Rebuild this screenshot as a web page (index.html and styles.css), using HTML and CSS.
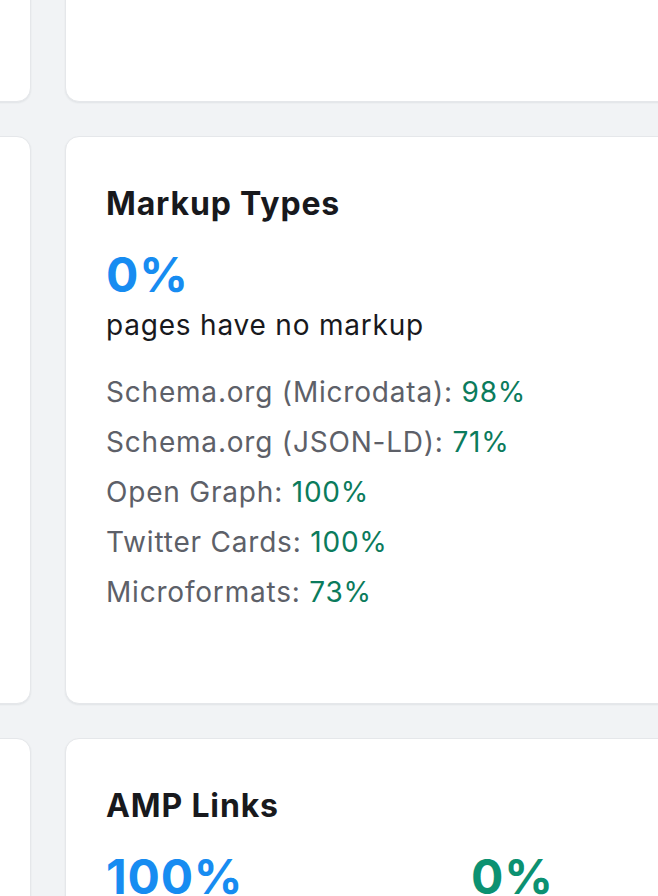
FILE: index.html
```html
<!DOCTYPE html>
<html lang="en">
<head>
<meta charset="utf-8">
<title>Site Audit</title>
<link rel="stylesheet" href="styles.css">
</head>
<body>
<main class="grid">
  <section class="card card-short"></section>
  <section class="card card-short"></section>

  <section class="card"></section>
  <section class="card card-pad">
    <h2 class="title">Markup Types</h2>
    <div class="big blue">0%</div>
    <p class="sub">pages have no markup</p>
    <ul class="list">
      <li>Schema.org (Microdata): <span class="green">98%</span></li>
      <li>Schema.org (JSON-LD): <span class="green">71%</span></li>
      <li>Open Graph: <span class="green">100%</span></li>
      <li>Twitter Cards: <span class="green">100%</span></li>
      <li>Microformats: <span class="green">73%</span></li>
    </ul>
  </section>

  <section class="card"></section>
  <section class="card card-pad">
    <h2 class="title">AMP Links</h2>
    <div class="cols">
      <div>
        <div class="big blue">100%</div>
        <p class="sub">pages have AMP links</p>
      </div>
      <div>
        <div class="big green-big">0%</div>
        <p class="sub">pages have no AMP links</p>
      </div>
    </div>
  </section>
</main>
</body>
</html>
```

FILE: styles.css
```css
html, body {
  margin: 0;
  padding: 0;
  overflow: hidden;
  height: 100%;
}

body {
  background: #f1f3f5;
  font-family: Inter, "Noto Sans", "Liberation Sans", sans-serif;
  color: #18191d;
}

.grid {
  display: grid;
  grid-template-columns: 331px 782px;
  grid-template-rows: 302px 568px 400px;
  gap: 34px;
  margin-top: -200px;
  margin-left: -300px;
  width: 1147px;
}

.card {
  background: #ffffff;
  border: 1px solid #e5e7ea;
  border-radius: 14px;
  box-shadow: 0 1px 2px rgba(16, 24, 40, 0.07);
  box-sizing: border-box;
}

.card-pad {
  padding: 47px 42px 40px 40px;
}

.title {
  margin: 0;
  font-size: 32px;
  line-height: 40px;
  font-weight: 700;
  color: #18191d;
  letter-spacing: 0.85px;
}

.big {
  margin-top: 23px;
  font-size: 48px;
  line-height: 56px;
  font-weight: 700;
  letter-spacing: 0.8px;
}

.blue {
  color: #178cf1;
}

.green-big {
  color: #0c9171;
}

.sub {
  margin: 4px 0 0;
  font-size: 28px;
  line-height: 36px;
  color: #18191d;
  letter-spacing: 0.8px;
}

.list {
  list-style: none;
  margin: 24px 0 0;
  padding: 0;
  font-size: 28px;
  line-height: 50px;
  color: #5d6068;
  letter-spacing: 0.8px;
}

.green {
  color: #0b7b5c;
}

.cols {
  display: grid;
  grid-template-columns: 1fr 1fr;
  column-gap: 32px;
}
```
